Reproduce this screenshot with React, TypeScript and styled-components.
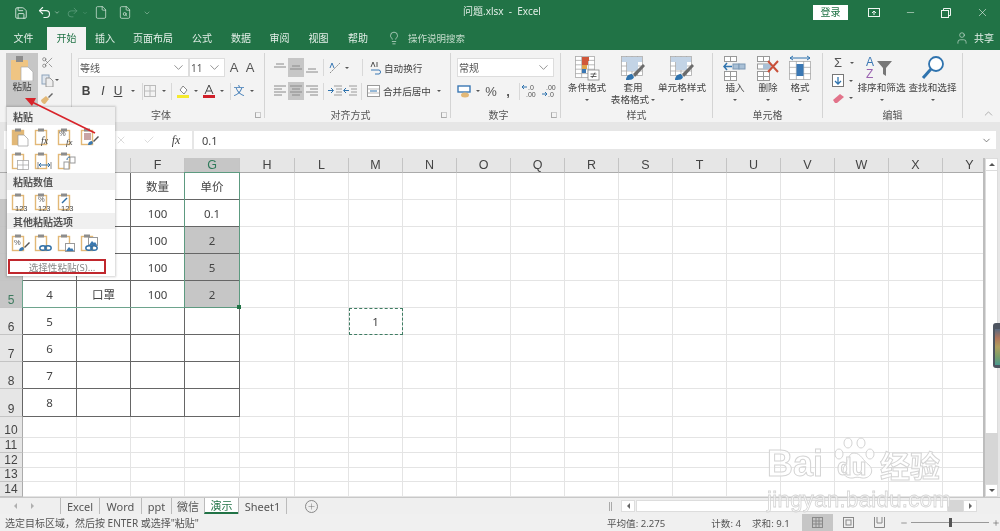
import React from "react";
import styled, { createGlobalStyle } from "styled-components";
import { Save, Undo2, Redo2, File, FileSearch, Lightbulb, User, X, Minus, Check, Scissors, ChevronDown, ChevronUp, Plus } from "lucide-react";

const Global = createGlobalStyle`
  html, body { margin: 0; padding: 0; background: #fff; }
  * { box-sizing: border-box; }
`;

const CJK = `"Noto Sans", "Noto Sans CJK SC", sans-serif`;
const HEAD = `"Liberation Sans", sans-serif`;

const Page = styled.div`
  position: relative; width: 1000px; height: 531px; overflow: hidden;
  display: flex; flex-direction: column;
  font-family: ${CJK}; font-size: 10px; color: #444; background: #fff;
  filter: blur(0.3px);
`;
const Slot = styled.span<{ $w: number; $ml?: number }>`
  display: inline-flex; align-items: center; justify-content: center; flex: none;
  width: ${p => p.$w}px; margin-left: ${p => p.$ml ?? 0}px; height: 100%;
`;
const TitleBar = styled.div`
  height: 25px; background: #217346; color: #eef5f0;
  display: grid; grid-template-columns: 1fr auto 1fr; align-items: center;
`;
const Quick = styled.div`display: flex; align-items: center; height: 100%; padding-left: 12px;`;
const DocTitle = styled.div`padding-left: 4px; font-size: 10px; line-height: 23px; padding-bottom: 2px; white-space: pre; color: #dfece4;`;
const WinControls = styled.div`display: flex; justify-content: flex-end; align-items: center; height: 100%;`;
const Login = styled.button`
  width: 35px; height: 15px; margin-right: 8px; padding: 0; border: 0; background: #fff; color: #217346;
  font: 10px ${CJK}; line-height: 15px;
`;
const Tabs = styled.div`height: 25px; background: #217346; display: flex; align-items: stretch; padding-top: 2px; color: #e4efe8;`;
const Tab = styled.div<{ $w: number; $active?: boolean }>`
  width: ${p => p.$w}px; flex: none; display: flex; align-items: center; justify-content: center; font-size: 10px; padding-bottom: 2px;
  background: ${p => (p.$active ? "#f3f3f3" : "transparent")}; color: ${p => (p.$active ? "#217346" : "inherit")};
`;
const TellMe = styled.div`display: flex; align-items: center; gap: 7px; margin-left: 9px; padding-bottom: 2px; color: #c4dccc; font-size: 9.5px;`;
const Share = styled.div`margin-left: auto; display: flex; align-items: center; gap: 5px; padding: 0 6px 2px 0; font-size: 10px; color: #e4efe8;`;

const Ribbon = styled.div`height: 72px; background: #f3f3f3; display: flex; align-items: flex-start;`;
const Group = styled.div<{ $w: number }>`
  width: ${p => p.$w}px; flex: none; height: 65px; margin-top: 3px; border-right: 1px solid #d4d4d4;
  display: flex; flex-direction: column;
`;
const GroupBody = styled.div<{ $pl?: number; $row?: boolean; $pt?: number }>`
  height: 54px; flex: none; padding-left: ${p => p.$pl ?? 0}px; padding-top: ${p => p.$pt ?? 5}px;
  display: flex; flex-direction: ${p => (p.$row ? "row" : "column")};
`;
const GroupFoot = styled.div<{ $launch?: boolean }>`
  height: 14px; flex: none; display: grid; grid-template-columns: 1fr auto 1fr; align-items: center; color: #555; font-size: 10px;
  padding-right: ${p => (p.$launch ? 14 : 0)}px;
`;
const Launcher = styled.span`
  justify-self: end; margin-right: -11px; width: 6px; height: 6px; border: 1px solid #aaa; border-top-color: #ccc; border-right-color: #ccc;
`;
const ToolRow = styled.div<{ $h?: number; $mt?: number }>`
  display: flex; align-items: center; height: ${p => p.$h ?? 19}px; margin-top: ${p => p.$mt ?? 0}px;
`;
const Field = styled.div<{ $w: number }>`
  width: ${p => p.$w}px; height: 19px; flex: none; background: #fff; border: 1px solid #ddd;
  display: flex; align-items: center; justify-content: space-between; padding: 0 2px 0 1px; color: #555; font-size: 10px;
`;
const Pressed = styled(Slot)`background: #c6c6c6;`;
const Divider = styled.span<{ $ml?: number }>`
  width: 1px; height: 17px; flex: none; background: #d8d8d8; margin-left: ${p => p.$ml ?? 0}px;
`;
const RowText = styled.span<{ $ml?: number }>`color: #444; white-space: nowrap; font-size: 9.6px; margin-left: ${p => p.$ml ?? 0}px;`;
const WenText = styled.span`color: #3b78b4; font-size: 11px; line-height: 14px;`;
const GrowA = styled.span`font: 13px "Liberation Sans", sans-serif; color: #555;`;
const StyleLetter = styled.span`font: 12px "Liberation Sans", sans-serif; color: #444;`;
const PasteButton = styled.div`
  width: 32px; height: 54px; margin-left: 6px; background: #c6c6c6; display: flex; flex-direction: column; align-items: center; padding-top: 2px; color: #333;
`;
const MiniColumn = styled.div<{ $w?: number }>`display: flex; flex-direction: column; margin-left: 1px; width: ${p => p.$w ?? 24}px;`;
const MiniRow = styled.div`height: 18px; display: flex; align-items: center;`;
const Large = styled.div<{ $w: number; $ml?: number }>`
  width: ${p => p.$w}px; margin-left: ${p => p.$ml ?? 0}px; flex: none; display: flex; flex-direction: column; align-items: center;
  color: #444; font-size: 9.6px; line-height: 12px; white-space: nowrap;
`;
const LargeIcon = styled.div`height: 28px; display: flex; align-items: center; justify-content: center;`;
const Caret = styled.span`
  display: inline-block; width: 0; height: 0; border-left: 2px solid transparent; border-right: 2px solid transparent; border-top: 2px solid #555;
`;
const CaretLine = styled.div`height: 12px; display: flex; align-items: center; gap: 2px;`;
const Collapse = styled.div`margin-left: auto; align-self: flex-end; padding: 0 5px 2px 0; color: #777; display: flex;`;

const FormulaBand = styled.div`
  height: 36px; flex: none; background: #e6e6e6; padding: 9px 4px 9px 0; display: flex; gap: 2px;
`;
const NameBox = styled.div`width: 100px; margin-left: 4px; background: #fff;`;
const FxBox = styled.div`
  width: 77px; margin-left: 9px; background: #fff; display: flex; align-items: center; color: #aaa;
`;
const FxText = styled.span`font: italic 12px "Liberation Serif", serif; color: #444;`;
const Input = styled.div`
  flex: 1; background: #fff; display: flex; align-items: center; justify-content: space-between; padding: 0 4px 0 8px; font-size: 11px; color: #444;
`;

const SheetArea = styled.div`height: 339px; display: flex; flex: none;`;
const Grid = styled.div`
  width: 985px; flex: none; height: 100%; display: grid; background: #fff; border-right: 2px solid #bdbdbd; overflow: hidden;
  grid-template-columns: 23px 54px 54px 54px 55px 55px repeat(13, 54px);
  grid-template-rows: 15px repeat(8, 27px) 28px 21px 15px 15px 14px 15px;
`;
const place = (p: { $r: number | string; $c: number | string }) => ({ style: { gridRow: p.$r, gridColumn: p.$c } });
const ColHead = styled.div.attrs(place)<{ $r: number; $c: number; $on?: boolean }>`
  display: flex; align-items: center; justify-content: center; font: 12.5px/14px ${HEAD};
  background: ${p => (p.$on ? "#c6c6c6" : "#e6e6e6")}; color: ${p => (p.$on ? "#2f7a5a" : "#444")};
  border-right: 1px solid #c4c4c4; border-bottom: 1px solid ${p => (p.$on ? "#2f7a5a" : "#ababab")};
`;
const RowHead = styled.div.attrs(place)<{ $r: number; $c: number; $on?: boolean; $edge?: boolean }>`
  display: flex; align-items: flex-end; justify-content: center; font: 12px/13px ${HEAD};
  background: ${p => (p.$on ? "#c6c6c6" : "#e6e6e6")}; color: ${p => (p.$on ? "#3d7a5e" : "#444")};
  border-bottom: 1px solid #c4c4c4; border-right: 1px solid ${p => (p.$edge ? "#666" : "#ababab")};
`;
const Cell = styled.div.attrs(place)<{ $r: number; $c: number; $table?: boolean; $fill?: boolean; $ants?: boolean }>`
  display: flex; align-items: center; justify-content: center; font-size: 11.5px; color: #444; white-space: nowrap;
  background: ${p => (p.$fill ? "#c6c6c6" : "#fff")};
  border-right: 1px solid ${p => (p.$table ? "#666" : "#e4e4e4")};
  border-bottom: 1px solid ${p => (p.$table ? "#666" : "#e4e4e4")};
  ${p => p.$ants && "outline: 1.5px dashed #3f7d63; outline-offset: -1px;"}
`;
const SelectBox = styled.div.attrs(place)<{ $r: string; $c: number }>`
  position: relative; pointer-events: none; margin: -1px 0 0 -1px; border: 1.5px solid #5d9a80; z-index: 1;
`;
const RowBand = styled.div.attrs(place)<{ $r: number; $c: string }>`
  pointer-events: none; margin: -1px 0 0 -1px; border: 1.5px solid #6ea48d; border-top: 0; border-right: 0; z-index: 1;
`;
const Handle = styled.span`
  position: absolute; right: -2px; bottom: -2px; width: 4px; height: 4px; background: #217346;
`;

const VScroll = styled.div`flex: 1; display: flex; flex-direction: column; padding-right: 2px; background: #e6e6e6;`;
const ScrollBtn = styled.div`
  height: 13px; background: #fff; display: flex; align-items: center; justify-content: center; flex: none; border: 1px solid #dcdcdc;
`;
const UpTri = styled.span`width: 0; height: 0; border: 3px solid transparent; border-bottom: 3px solid #555; border-top: 0;`;
const DownTri = styled.span`width: 0; height: 0; border: 3px solid transparent; border-top: 3px solid #555; border-bottom: 0;`;
const LeftTri = styled.span`width: 0; height: 0; border: 3px solid transparent; border-right: 3px solid #666; border-left: 0;`;
const RightTri = styled.span`width: 0; height: 0; border: 3px solid transparent; border-left: 3px solid #666; border-right: 0;`;
const Thumb = styled.div`height: 262px; background: #fff; flex: none; border-right: 1px solid #dcdcdc; border-left: 1px solid #dcdcdc;`;
const TrackRest = styled.div`flex: 1; background: #d6d6d6;`;
const Meter = styled.div`
  position: absolute; right: 0; top: 323px; width: 7px; height: 45px; border-radius: 3px 0 0 3px; background: #4e5560; padding: 6px 0 3px 2px;
  display: flex;
`;
const MeterBar = styled.div`
  width: 5px; flex: 1; background: linear-gradient(#5a6a80, #b0755c 25%, #b0a060 50%, #7e9f68 75%, #4a9a90);
`;

const Strip = styled.div`
  height: 17px; flex: none; background: #efefef; border-top: 1px solid #c8c8c8; display: flex; align-items: stretch;
`;
const NavArrows = styled.div`display: flex; align-items: center; gap: 14px; padding-left: 14px; width: 60px; opacity: .45;`;
const SheetTab = styled.div<{ $w: number; $active?: boolean }>`
  width: ${p => p.$w}px; flex: none; display: flex; align-items: center; justify-content: center;
  font-size: 11px; color: ${p => (p.$active ? "#217346" : "#555")};
  border-left: 1px solid #bbb;
  background: ${p => (p.$active ? "#fff" : "transparent")};
  border-bottom: ${p => (p.$active ? "2px solid #217346" : "0")};
`;
const AddSheet = styled.div`
  margin-left: 18px; width: 13px; height: 13px; align-self: center; border: 1px solid #888; border-radius: 50%; display: flex; align-items: center; justify-content: center; color: #666;
`;
const HScroll = styled.div`margin-left: auto; width: 391px; display: flex; align-items: center; padding: 0 23px 0 0; height: 100%;`;
const HBtn = styled.div`width: 14px; height: 12px; background: #fff; border: 1px solid #ddd; display: flex; align-items: center; justify-content: center; flex: none;`;
const HThumb = styled.div`flex: 1; height: 12px; background: #fff; border: 1px solid #ddd; margin-left: 1px;`;
const HRest = styled.div`width: 15px; height: 12px; background: #d6d6d6;`;
const DotHandle = styled.span`width: 3px; height: 9px; border-left: 1px solid #aaa; border-right: 1px solid #aaa; margin-right: 9px;`;

const StatusBar = styled.div`
  height: 17px; flex: none; background: #f0f0f0; display: flex; align-items: center; color: #555; font-size: 9.6px; padding-left: 5px; white-space: nowrap;
`;
const StatusNote = styled.span`font-size: 10px;`;
const StatText = styled.span<{ $x: number }>`margin-left: ${p => p.$x}px;`;
const ViewBtn = styled.span<{ $on?: boolean; $ml?: number }>`
  width: 31px; height: 100%; display: flex; align-items: center; justify-content: center; flex: none; margin-left: ${p => p.$ml ?? 0}px;
  background: ${p => (p.$on ? "#c6c6c6" : "transparent")};
`;
const Zoomer = styled.div`margin-left: 5px; width: 100px; display: flex; align-items: center; gap: 3px; color: #666;`;
const ZoomTrack = styled.div`flex: 1; height: 1px; background: #999; position: relative;`;
const ZoomKnob = styled.span`position: absolute; left: 38px; top: -4px; width: 3px; height: 9px; background: #555;`;

const Menu = styled.div`
  position: absolute; left: 7px; top: 107px; width: 108px; height: 169px; background: #fff; z-index: 5;
  box-shadow: 0 0 2px 1px rgba(0,0,0,.18); display: flex; flex-direction: column;
`;
const MenuHead = styled.div<{ $h: number }>`
  height: ${p => p.$h}px; flex: none; background: #f0f0f0; padding-left: 6px; display: flex; align-items: center; font-size: 10px; font-weight: 700; color: #555;
`;
const MenuIcons = styled.div<{ $h: number }>`
  height: ${p => p.$h}px; flex: none; display: flex; gap: 3px; padding-left: 3px; align-items: center;
`;
const MenuLink = styled.div`
  margin: 2px 0 0 1px; width: 98px; height: 15px; border: 2px solid #c0272d; display: flex; align-items: center; justify-content: center;
  font-size: 9.6px; color: #888; padding-left: 10px; white-space: nowrap;
`;
const ArrowLayer = styled.svg`position: absolute; left: 0; top: 0; z-index: 6; pointer-events: none;`;

const Mark = styled.div`
  position: absolute; left: 767px; top: 436px; z-index: 4; width: 190px; height: 76px; pointer-events: none; display: flex; flex-direction: column;
`;
const MarkTop = styled.div`display: flex; align-items: flex-end; height: 46px;`;
const MarkWord = styled.span<{ $size: number; $ml?: number }>`
  font-family: "Liberation Sans", "Noto Sans CJK SC", sans-serif; font-weight: 700; font-size: ${p => p.$size}px; line-height: 1;
  color: rgba(255,255,255,.65); -webkit-text-stroke: 1px #d4d4d4; margin-left: ${p => p.$ml ?? 0}px; white-space: nowrap;
`;
const MarkPaw = styled.span`position: relative; width: 46px; height: 46px; flex: none; margin-left: 8px;`;
const MarkDu = styled.span`
  position: absolute; left: 6px; bottom: 3px; font: 700 24px/1 "Liberation Sans", sans-serif; color: rgba(255,255,255,.65); -webkit-text-stroke: 1px #d4d4d4;
`;
const PawSvg = styled.svg`display: block;`;
const MarkSub = styled.div`
  margin-top: 6px; font-family: "Liberation Sans", sans-serif; font-size: 22px; line-height: 24px; font-weight: 400; color: rgba(255,255,255,.6);
  -webkit-text-stroke: .8px #d4d4d4; white-space: nowrap; letter-spacing: 0.4px;
`;

/* ---------- icons ---------- */
const Chev = () => <ChevronDown size={15} strokeWidth={1} color="#555" />;
const Tan = "#e2b877";
const Clip = ({ fill }: { fill?: boolean }) => (
  <g>
    <rect x="2.5" y="3.5" width="11" height="14" fill={fill ? Tan : "#fff"} stroke={Tan} strokeWidth="1.4" />
    <rect x="5" y="1.5" width="6" height="3" fill="#8d8d8d" />
  </g>
);
const Mini = ({ children }: { children?: React.ReactNode }) => (
  <svg width="20" height="20" viewBox="0 0 20 20"><Clip />{children}</svg>
);
const FxT = ({ x = 8, y = 17, s = "fx", z = 10 }: { x?: number; y?: number; s?: string; z?: number }) => (
  <text x={x} y={y} fontFamily="Liberation Serif" fontStyle="italic" fontSize={z} fill="#444">{s}</text>
);
const Num = () => <text x="5" y="18.5" fontFamily="Liberation Sans" fontSize="7.5" fill="#444">123</text>;
const Pct = ({ x = 5, y = 11 }: { x?: number; y?: number }) => <text x={x} y={y} fontFamily="Liberation Sans" fontSize="7.5" fill="#555">%</text>;
const Brush = ({ x = 0, y = 0 }: { x?: number; y?: number }) => (
  <g transform={`translate(${x} ${y})`}>
    <path d="M9 18c0-3 2-4 4-4l1 2c-1 2-3 2-5 2z" fill="#3a78b0" />
    <path d="M14 14l5-5 1 1-5 5z" fill="#555" />
  </g>
);
const Link = () => (
  <g fill="none" stroke="#2f6ea5" strokeWidth="1.4">
    <ellipse cx="10" cy="15" rx="3.2" ry="2.2" /><ellipse cx="15" cy="15" rx="3.2" ry="2.2" />
  </g>
);
const Pic = ({ x = 9, y = 10 }: { x?: number; y?: number }) => (
  <g transform={`translate(${x} ${y})`}>
    <rect x=".5" y=".5" width="9" height="8" fill="#fff" stroke="#999" />
    <path d="M1 8l3-4 2 2 1-1 2 3z" fill="#3a78b0" />
  </g>
);
const PasteMain = () => (
  <svg width="24" height="26" viewBox="0 0 24 26">
    <rect x="1" y="5" width="17" height="20" fill="#efc583" rx="1" />
    <rect x="6" y="1" width="7" height="6" fill="#8d8d8d" />
    <path d="M11 12h7l5 5v9H11z" fill="#fff" stroke="#aaa" strokeWidth=".7" />
  </svg>
);
const CopyIco = () => (
  <svg width="13" height="13" viewBox="0 0 13 13"><rect x="1" y="1" width="7" height="9" fill="#dfe6ee" stroke="#8ea4bb" /><path d="M5 4h4l3 3v6H5z" fill="#eee" stroke="#999" /></svg>
);
const BrushIco = () => (
  <svg width="14" height="14" viewBox="0 0 14 14"><path d="M1 9l5-4 3 3-4 5c-2 0-4-2-4-4z" fill={Tan} /><path d="M8 6l4-4 1 1-4 4z" fill="#666" /></svg>
);
const Tbl = ({ x = 0, y = 0, w = 24, h = 24, c = 4, r = 5, s = "#aaa" }: { x?: number; y?: number; w?: number; h?: number; c?: number; r?: number; s?: string }) => (
  <g stroke={s} strokeWidth=".8" fill="none">
    <rect x={x + .5} y={y + .5} width={w - 1} height={h - 1} fill="#fff" />
    {Array.from({ length: c - 1 }, (_, i) => <line key={i} x1={x + (w * (i + 1)) / c} x2={x + (w * (i + 1)) / c} y1={y} y2={y + h} />)}
    {Array.from({ length: r - 1 }, (_, i) => <line key={i} y1={y + (h * (i + 1)) / r} y2={y + (h * (i + 1)) / r} x1={x} x2={x + w} />)}
  </g>
);
const CondFormat = () => (
  <svg width="26" height="26" viewBox="0 0 26 26">
    <Tbl x={1} y={1} w={20} h={22} c={3} r={5} />
    <rect x="8" y="2" width="7" height="4" fill="#d0573a" /><rect x="8" y="6" width="6" height="4" fill="#d0573a" />
    <rect x="8" y="10" width="5" height="4" fill="#e0a34a" /><rect x="8" y="14" width="4" height="4" fill="#3b78b4" />
    <rect x="14" y="15" width="11" height="10" fill="#fff" stroke="#888" strokeWidth=".8" />
    <path d="M16.500 19h6M16.500 21.500h6M21 17.500l-3 5.500" stroke="#444" strokeWidth=".8" fill="none" />
  </svg>
);
const TableFmt = ({ blue = false }: { blue?: boolean }) => (
  <svg width="26" height="26" viewBox="0 0 26 26">
    <Tbl x={1} y={1} w={22} h={20} c={4} r={4} />
    <rect x="2" y="2" width="20" height="5" fill="#c3d4e6" />
    <rect x="7" y={blue ? 6 : 7} width="11" height="9" fill="#c3d4e6" />
    <path d="M6 25c0-4 3-6 6-6l2 3c-1 3-4 3-8 3z" fill="#2f73ae" />
    <path d="M13 19l10-10 2 2-10 11z" fill="#6b6b6b" />
  </svg>
);
const InsertIco = ({ del }: { del?: boolean }) => (
  <svg width="26" height="26" viewBox="0 0 26 26">
    <rect x="2.500" y="1.500" width="6" height="5" fill="#fff" stroke="#999" /><rect x="8.500" y="1.500" width="6" height="5" fill="#fff" stroke="#999" />
    <rect x="2.500" y="16.500" width="6" height="5" fill="#fff" stroke="#999" /><rect x="8.500" y="16.500" width="6" height="5" fill="#fff" stroke="#999" />
    <rect x="2.500" y="21.500" width="6" height="4" fill="#fff" stroke="#999" /><rect x="8.500" y="21.500" width="6" height="4" fill="#fff" stroke="#999" />
    {del ? (
      <>
        <rect x="2.500" y="9" width="13" height="5" fill="#fff" stroke="#999" />
        <rect x="8" y="9" width="8" height="5" fill="#a9c0d6" />
        <path d="M13 6l10 11M23 6L13 17" stroke="#c9503a" strokeWidth="2" />
      </>
    ) : (
      <>
        <rect x="11" y="9" width="6" height="5" fill="#a9c0d6" stroke="#7c98b4" /><rect x="17" y="9" width="6" height="5" fill="#a9c0d6" stroke="#7c98b4" />
        <path d="M10 11.500H2M5 8l-3 3.500L5 15" stroke="#2f73ae" strokeWidth="1.5" fill="none" />
      </>
    )}
  </svg>
);
const FormatIco = () => (
  <svg width="26" height="26" viewBox="0 0 26 26">
    <path d="M3 3h20M6 1L3 3l3 2M20 1l3 2-3 2" stroke="#2f73ae" fill="none" />
    <Tbl x={2} y={6} w={22} h={19} c={3} r={3} />
    <rect x="9.500" y="9" width="7" height="12" fill="#3b78b4" />
  </svg>
);
const SortIco = () => (
  <svg width="34" height="28" viewBox="0 0 34 28">
    <text x="1" y="12" fontFamily="Liberation Sans" fontSize="12" fill="#3b78b4">A</text>
    <text x="1" y="24" fontFamily="Liberation Sans" fontSize="12" fill="#9a62b0">Z</text>
    <path d="M12 7h15l-6 7v8l-3-2v-6z" fill="#777" />
  </svg>
);
const FindIco = () => (
  <svg width="26" height="28" viewBox="0 0 26 28">
    <circle cx="16" cy="10" r="7" fill="#fff" stroke="#2f73ae" strokeWidth="1.8" />
    <path d="M11 15L3 24" stroke="#2f73ae" strokeWidth="3" />
  </svg>
);
const lines = (d: string) => <svg width="14" height="12" viewBox="0 0 14 12"><path d={d} stroke="#8a8a8a" fill="none" /></svg>;

/* the first two columns and rows 1-4 of the left column lie under the open paste menu */
const columns = ["", "", "F", "G", "H", "L", "M", "N", "O", "Q", "R", "S", "T", "U", "V", "W", "X", "Y"];
const rowHeads = [1, 2, 3, 4, 5, 6, 7, 8, 9, 10, 11, 12, 13, 14];
const tableData: Record<number, string[]> = {
  1: ["", "", "数量", "单价"],
  2: ["", "", "100", "0.1"],
  3: ["", "", "100", "2"],
  4: ["", "", "100", "5"],
  5: ["4", "口罩", "100", "2"],
  6: ["5", "", "", ""],
  7: ["6", "", "", ""],
  8: ["7", "", "", ""],
  9: ["8", "", "", ""],
};

const tabs: [string, number, boolean?][] = [["文件", 47], ["开始", 39, true], ["插入", 38], ["页面布局", 58], ["公式", 40], ["数据", 38], ["审阅", 39], ["视图", 39], ["帮助", 40]];
const sheetTabs: [string, number, boolean?][] = [["Excel", 39], ["Word", 42], ["ppt", 30], ["微信", 33], ["演示", 34, true], ["Sheet1", 48]];

export default function App() {
  return (
    <Page>
      <Global />
      <TitleBar>
        <Quick>
          <Slot $w={18}><Save size={14} strokeWidth={1.4} /></Slot>
          <Slot $w={20} $ml={4}><Undo2 size={15} strokeWidth={1.8} /></Slot>
          <Slot $w={6}><ChevronDown size={7} strokeWidth={2} /></Slot>
          <Slot $w={16} $ml={4}><Redo2 size={13} strokeWidth={1.4} color="#5f9e7f" /></Slot>
          <Slot $w={6} $ml={2}><ChevronDown size={6} strokeWidth={2} color="#5f9e7f" /></Slot>
          <Slot $w={14} $ml={6}><File size={15} strokeWidth={1.1} /></Slot>
          <Slot $w={14} $ml={10}><FileSearch size={15} strokeWidth={1.1} /></Slot>
          <Slot $w={10} $ml={10}><ChevronDown size={8} strokeWidth={1.5} color="#b5d2c0" /></Slot>
        </Quick>
        <DocTitle>问题.xlsx  -  Excel</DocTitle>
        <WinControls>
          <Login>登录</Login>
          <Slot $w={36}>
            <svg width="12" height="10" viewBox="0 0 12 10"><rect x=".5" y=".5" width="11" height="8" fill="none" stroke="#eef5f0" /><path d="M6 7V3M4 5l2-2 2 2" stroke="#eef5f0" fill="none" /></svg>
          </Slot>
          <Slot $w={36}><Minus size={11} strokeWidth={1.2} /></Slot>
          <Slot $w={36}>
            <svg width="10" height="10" viewBox="0 0 10 10"><rect x=".5" y="2.500" width="7" height="7" fill="none" stroke="#eef5f0" /><path d="M2.500 2V.5h7v7H8" fill="none" stroke="#eef5f0" /></svg>
          </Slot>
          <Slot $w={36}><X size={13} strokeWidth={1.1} /></Slot>
        </WinControls>
      </TitleBar>

      <Tabs>
        {tabs.map(([t, w, a]) => <Tab key={t} $w={w} $active={a}>{t}</Tab>)}
        <TellMe><Lightbulb size={14} strokeWidth={1.1} color="#e4efe8" />操作说明搜索</TellMe>
        <Share><User size={14} strokeWidth={1} />共享</Share>
      </Tabs>

      <Ribbon>
        <Group $w={72}>
          <GroupBody $row $pt={0}>
            <PasteButton>
              <PasteMain />
              <Large $w={30}><CaretLine>粘贴</CaretLine></Large>
            </PasteButton>
            <MiniColumn>
              <MiniRow><Slot $w={16}><Scissors size={13} strokeWidth={1} color="#555" /></Slot></MiniRow>
              <MiniRow><Slot $w={16}><CopyIco /></Slot><Caret /></MiniRow>
              <MiniRow><Slot $w={16}><BrushIco /></Slot></MiniRow>
            </MiniColumn>
          </GroupBody>
        </Group>

        <Group $w={193}>
          <GroupBody $pl={6}>
            <ToolRow>
              <Field $w={111}>等线<Chev /></Field>
              <Field $w={36}>11<Chev /></Field>
              <Slot $w={16} $ml={1}><GrowA>A</GrowA></Slot>
              <Slot $w={16}><GrowA>A</GrowA></Slot>
            </ToolRow>
            <ToolRow $h={18} $mt={5}>
              <Slot $w={16}><StyleLetter><b>B</b></StyleLetter></Slot>
              <Slot $w={16} $ml={1}><StyleLetter><i>I</i></StyleLetter></Slot>
              <Slot $w={14}><StyleLetter><u>U</u></StyleLetter></Slot>
              <Slot $w={8} $ml={4}><Caret /></Slot>
              <Divider $ml={5} />
              <Slot $w={14}>
                <svg width="12" height="12" viewBox="0 0 12 12"><rect x=".5" y=".5" width="11" height="11" fill="none" stroke="#bbb" /><path d="M6 0v12M0 6h12" stroke="#bbb" /></svg>
              </Slot>
              <Slot $w={8} $ml={3}><Caret /></Slot>
              <Divider $ml={3} />
              <Slot $w={16} $ml={3}>
                <svg width="14" height="14" viewBox="0 0 14 14"><path d="M7 2l4 4-3 4-4-4z" fill="#fff" stroke="#888" /><rect x="1" y="11" width="12" height="3" fill="#f5ea2d" /></svg>
              </Slot>
              <Slot $w={8} $ml={1}><Caret /></Slot>
              <Slot $w={16} $ml={1}>
                <svg width="14" height="14" viewBox="0 0 14 14"><path d="M3 10L7 1l4 9M4.500 7h5" stroke="#444" fill="none" /><rect x="1" y="11" width="12" height="3" fill="#d0202a" /></svg>
              </Slot>
              <Slot $w={8} $ml={1}><Caret /></Slot>
              <Divider $ml={4} />
              <Slot $w={16}><WenText>文</WenText></Slot>
              <Slot $w={8} $ml={1}><Caret /></Slot>
            </ToolRow>
          </GroupBody>
          <GroupFoot $launch><span /><span>字体</span><Launcher /></GroupFoot>
        </Group>

        <Group $w={186}>
          <GroupBody $pl={7}>
            <ToolRow>
              <Slot $w={16}>{lines("M3 2h8M1 5h12")}</Slot>
              <Pressed $w={16}>{lines("M3 4h8M1 7h12")}</Pressed>
              <Slot $w={16}>{lines("M3 7h8M1 10h12")}</Slot>
              <Divider $ml={3} />
              <Slot $w={16} $ml={3}>
                <svg width="14" height="14" viewBox="0 0 14 14"><path d="M2 12L12 2" stroke="#8a8a8a" strokeDasharray="2 1" /><path d="M2 7l2-5 2 5" stroke="#3b78b4" fill="none" /></svg>
              </Slot>
              <Slot $w={8}><Caret /></Slot>
              <Divider $ml={11} />
              <Slot $w={14} $ml={6}>
                <svg width="12" height="14" viewBox="0 0 12 14"><path d="M1 6l2-5 2 5M7 1v5" stroke="#555" fill="none" /><path d="M1 9h8c2 0 2 4 0 4H5" stroke="#3b78b4" fill="none" /></svg>
              </Slot>
              <RowText $ml={1}>自动换行</RowText>
            </ToolRow>
            <ToolRow $h={18} $mt={5}>
              <Slot $w={16}>{lines("M1 1h12M1 4h8M1 7h12M1 10h8")}</Slot>
              <Pressed $w={16}>{lines("M1 1h12M3 4h8M1 7h12M3 10h8")}</Pressed>
              <Slot $w={16}>{lines("M1 1h12M5 4h8M1 7h12M5 10h8")}</Slot>
              <Divider $ml={3} />
              <Slot $w={16} $ml={3}>
                <svg width="14" height="12" viewBox="0 0 14 12"><path d="M6 1h8M8 4h6M8 7h6M6 10h8" stroke="#9a9a9a" /><path d="M0 5.500h5M3 3l2.500 2.500L3 8" stroke="#2f73ae" fill="none" /></svg>
              </Slot>
              <Slot $w={16} $ml={-1}>
                <svg width="14" height="12" viewBox="0 0 14 12"><path d="M6 1h8M8 4h6M8 7h6M6 10h8" stroke="#9a9a9a" /><path d="M6 5.500H1M3 3L.5 5.500 3 8" stroke="#2f73ae" fill="none" /></svg>
              </Slot>
              <Divider $ml={3} />
              <Slot $w={14} $ml={4}>
                <svg width="13" height="12" viewBox="0 0 13 12"><rect x=".5" y=".5" width="12" height="11" fill="#fff" stroke="#999" /><path d="M1 4h11M1 8h11" stroke="#bbb" /><path d="M3 6h7" stroke="#2f73ae" /></svg>
              </Slot>
              <RowText $ml={3}>合并后居中</RowText>
              <Slot $w={8} $ml={4}><Caret /></Slot>
            </ToolRow>
          </GroupBody>
          <GroupFoot $launch><span /><span>对齐方式</span><Launcher /></GroupFoot>
        </Group>

        <Group $w={110}>
          <GroupBody $pl={6}>
            <ToolRow><Field $w={97}>常规<Chev /></Field></ToolRow>
            <ToolRow $h={18} $mt={5}>
              <Slot $w={14}>
                <svg width="14" height="13" viewBox="0 0 14 13"><rect x="1" y="1" width="12" height="6" fill="#fff" stroke="#3b78b4" strokeWidth="1.4" /><ellipse cx="8" cy="10" rx="4" ry="2.500" fill={Tan} /></svg>
              </Slot>
              <Slot $w={8} $ml={3}><Caret /></Slot>
              <Slot $w={14} $ml={2}><GrowA>%</GrowA></Slot>
              <Slot $w={12} $ml={4}><GrowA><b>,</b></GrowA></Slot>
              <Divider $ml={5} />
              <Slot $w={18} $ml={1}>
                <svg width="18" height="16" viewBox="0 0 18 16"><path d="M1 4h5M3 2L1 4l2 2" stroke="#2f73ae" fill="none" /><text x="7" y="7" fontSize="7" fontFamily="Liberation Sans" fill="#555">.0</text><text x="5" y="14" fontSize="7" fontFamily="Liberation Sans" fill="#555">.00</text></svg>
              </Slot>
              <Slot $w={18} $ml={2}>
                <svg width="18" height="16" viewBox="0 0 18 16"><text x="5" y="7" fontSize="7" fontFamily="Liberation Sans" fill="#555">.00</text><path d="M1 11h5M4 9l2 2-2 2" stroke="#2f73ae" fill="none" /><text x="7" y="14" fontSize="7" fontFamily="Liberation Sans" fill="#555">.0</text></svg>
              </Slot>
            </ToolRow>
          </GroupBody>
          <GroupFoot $launch><span /><span>数字</span><Launcher /></GroupFoot>
        </Group>

        <Group $w={152}>
          <GroupBody $row $pl={3} $pt={1}>
            <Large $w={46}><LargeIcon><CondFormat /></LargeIcon>条件格式<CaretLine><Caret /></CaretLine></Large>
            <Large $w={46}><LargeIcon><TableFmt /></LargeIcon>套用<CaretLine>表格格式<Caret /></CaretLine></Large>
            <Large $w={48} $ml={2}><LargeIcon><TableFmt blue /></LargeIcon>单元格样式<CaretLine><Caret /></CaretLine></Large>
          </GroupBody>
          <GroupFoot><span /><span>样式</span><span /></GroupFoot>
        </Group>

        <Group $w={110}>
          <GroupBody $row $pl={6} $pt={1}>
            <Large $w={32}><LargeIcon><InsertIco /></LargeIcon>插入<CaretLine><Caret /></CaretLine></Large>
            <Large $w={32} $ml={1}><LargeIcon><InsertIco del /></LargeIcon>删除<CaretLine><Caret /></CaretLine></Large>
            <Large $w={32}><LargeIcon><FormatIco /></LargeIcon>格式<CaretLine><Caret /></CaretLine></Large>
          </GroupBody>
          <GroupFoot><span /><span>单元格</span><span /></GroupFoot>
        </Group>

        <Group $w={140}>
          <GroupBody $row $pl={5} $pt={1}>
            <MiniColumn $w={29}>
              <MiniRow><Slot $w={18}><GrowA>Σ</GrowA></Slot><Slot $w={8} $ml={1}><Caret /></Slot></MiniRow>
              <MiniRow>
                <Slot $w={18}><svg width="12" height="13" viewBox="0 0 12 13"><rect x=".5" y=".5" width="11" height="12" fill="#fff" stroke="#777" /><path d="M6 3v7M3 7l3 3 3-3" stroke="#2f73ae" fill="none" strokeWidth="1.3" /></svg></Slot>
                <Slot $w={8}><Caret /></Slot>
              </MiniRow>
              <MiniRow>
                <Slot $w={18}><svg width="13" height="11" viewBox="0 0 13 11"><path d="M1 7l7-6 4 3-7 6H3z" fill="#e2738a" /></svg></Slot>
                <Slot $w={8}><Caret /></Slot>
              </MiniRow>
            </MiniColumn>
            <Large $w={47}><LargeIcon><SortIco /></LargeIcon>排序和筛选<CaretLine><Caret /></CaretLine></Large>
            <Large $w={47} $ml={4}><LargeIcon><FindIco /></LargeIcon>查找和选择<CaretLine><Caret /></CaretLine></Large>
          </GroupBody>
          <GroupFoot><span /><span>编辑</span><span /></GroupFoot>
        </Group>
        <Collapse><ChevronUp size={13} strokeWidth={1} /></Collapse>
      </Ribbon>

      <FormulaBand>
        <NameBox />
        <FxBox>
          <Slot $w={12}><X size={12} strokeWidth={1} color="#b8b8b8" /></Slot>
          <Slot $w={14} $ml={15}><Check size={12} strokeWidth={1} color="#b8b8b8" /></Slot>
          <Slot $w={14} $ml={13}><FxText>fx</FxText></Slot>
        </FxBox>
        <Input>0.1<ChevronDown size={11} strokeWidth={1.6} color="#555" /></Input>
      </FormulaBand>

      <SheetArea>
        <Grid>
          <ColHead $r={1} $c={1} />
          {columns.map((c, i) => <ColHead key={i} $r={1} $c={i + 2} $on={c === "G"}>{c}</ColHead>)}
          {rowHeads.map((n) => (
            <React.Fragment key={n}>
              <RowHead $r={n + 1} $c={1} $on={n >= 2 && n <= 5} $edge={n >= 5 && n <= 9}>{n >= 5 ? n : ""}</RowHead>
              {columns.map((c, i) => {
                const row = tableData[n];
                const inTable = !!row && i < 4;
                return (
                  <Cell key={i} $r={n + 1} $c={i + 2} $table={inTable} $fill={c === "G" && n >= 3 && n <= 5} $ants={c === "M" && n === 6}>
                    {inTable ? row[i] : c === "M" && n === 6 ? "1" : ""}
                  </Cell>
                );
              })}
            </React.Fragment>
          ))}
          <RowBand $r={6} $c="2 / 5" />
          <SelectBox $r="2 / 7" $c={5}><Handle /></SelectBox>
        </Grid>
        <VScroll>
          <ScrollBtn><UpTri /></ScrollBtn>
          <Thumb />
          <TrackRest />
          <ScrollBtn><DownTri /></ScrollBtn>
        </VScroll>
      </SheetArea>

      <Strip>
        <NavArrows><LeftTri /><RightTri /></NavArrows>
        {sheetTabs.map(([t, w, a]) => <SheetTab key={t} $w={w} $active={a}>{t}</SheetTab>)}
        <SheetTab $w={1} />
        <AddSheet><Plus size={9} strokeWidth={1.2} /></AddSheet>
        <HScroll>
          <DotHandle />
          <HBtn><LeftTri /></HBtn>
          <HThumb />
          <HRest />
          <HBtn><RightTri /></HBtn>
        </HScroll>
      </Strip>

      <StatusBar>
        <StatusNote>选定目标区域，然后按 ENTER 或选择"粘贴"</StatusNote>
        <StatText $x={408}>平均值: 2.275</StatText>
        <StatText $x={46}>计数: 4</StatText>
        <StatText $x={11}>求和: 9.1</StatText>
        <ViewBtn $on $ml={12}>
          <svg width="11" height="11" viewBox="0 0 11 11"><rect x=".5" y=".5" width="10" height="10" fill="none" stroke="#888" /><path d="M4 0v11M7 0v11M0 4h11M0 7h11" stroke="#888" /></svg>
        </ViewBtn>
        <ViewBtn>
          <svg width="11" height="11" viewBox="0 0 11 11"><rect x=".5" y=".5" width="10" height="10" fill="none" stroke="#888" /><rect x="3" y="3" width="5" height="5" fill="none" stroke="#888" /></svg>
        </ViewBtn>
        <ViewBtn>
          <svg width="11" height="11" viewBox="0 0 11 11"><path d="M.5 0v10.500h10V0M3 0v6h5V0" fill="none" stroke="#888" /></svg>
        </ViewBtn>
        <Zoomer>
          <Minus size={8} />
          <ZoomTrack><ZoomKnob /></ZoomTrack>
          <Plus size={8} />
        </Zoomer>
      </StatusBar>

      <Menu>
        <MenuHead $h={18}>粘贴</MenuHead>
        <MenuIcons $h={24}>
          <svg width="20" height="20" viewBox="0 0 20 20"><Clip fill /><path d="M8 8h6l4 4v7H8z" fill="#fff" stroke="#999" strokeWidth=".7" /></svg>
          <Mini><FxT /></Mini>
          <Mini><FxT x={10} y={18} z={9} /><Pct x={3} y={9} /></Mini>
          <Mini><rect x="5" y="6" width="7" height="7" fill="#c9a5a5" /><Brush /></Mini>
        </MenuIcons>
        <MenuIcons $h={24}>
          <Mini><g transform="translate(7 9)"><Tbl w={12} h={10} c={2} r={2} /></g></Mini>
          <Mini><path d="M6 14h11M6 14l2-2m-2 2l2 2M17 14l-2-2m2 2l-2 2" stroke="#2f6ea5" fill="none" /><path d="M5 11v7M18 11v7" stroke="#888" /></Mini>
          <Mini><rect x="8" y="11" width="5" height="7" fill="#fff" stroke="#999" /><rect x="14" y="6" width="5" height="6" fill="#fff" stroke="#999" /><path d="M11 9c0-2 1-3 3-3" stroke="#2f6ea5" fill="none" /></Mini>
        </MenuIcons>
        <MenuHead $h={17}>粘贴数值</MenuHead>
        <MenuIcons $h={23}>
          <Mini><Num /></Mini>
          <Mini><Pct y={10} /><Num /></Mini>
          <Mini><path d="M6 11l5-5" stroke="#2f6ea5" strokeWidth="1.5" /><Num /></Mini>
        </MenuIcons>
        <MenuHead $h={16}>其他粘贴选项</MenuHead>
        <MenuIcons $h={28}>
          <Mini><Pct x={4} y={12} /><Brush /></Mini>
          <Mini><Link /></Mini>
          <Mini><Pic /></Mini>
          <Mini><Pic x={9} y={4} /><Link /></Mini>
        </MenuIcons>
        <MenuLink>选择性粘贴(S)...</MenuLink>
      </Menu>

      <ArrowLayer width="120" height="140" viewBox="0 0 120 140">
        <path d="M95 133L32 102" stroke="#d8232a" strokeWidth="1.6" />
        <path d="M25 98l11 0-4 8z" fill="#d8232a" />
      </ArrowLayer>

      <Meter><MeterBar /></Meter>

      <Mark>
        <MarkTop>
          <MarkWord $size={36}>Bai</MarkWord>
          <MarkPaw>
            <PawSvg width="46" height="46" viewBox="0 0 46 46">
              <g fill="rgba(255,255,255,.65)" stroke="#d4d4d4">
                <ellipse cx="8" cy="18" rx="4" ry="5" /><ellipse cx="17" cy="7" rx="4" ry="5" /><ellipse cx="30" cy="7" rx="4" ry="5" /><ellipse cx="39" cy="18" rx="4" ry="5" />
                <path d="M23 17c7 0 9 8 15 12 6 6 1 14-7 13-4-1-6-1-9 0-8 1-13-6-8-13 4-4 3-12 9-12z" />
              </g>
            </PawSvg>
            <MarkDu>du</MarkDu>
          </MarkPaw>
          <MarkWord $size={30} $ml={3}>经验</MarkWord>
        </MarkTop>
        <MarkSub>jingyan.baidu.com</MarkSub>
      </Mark>
    </Page>
  );
}
